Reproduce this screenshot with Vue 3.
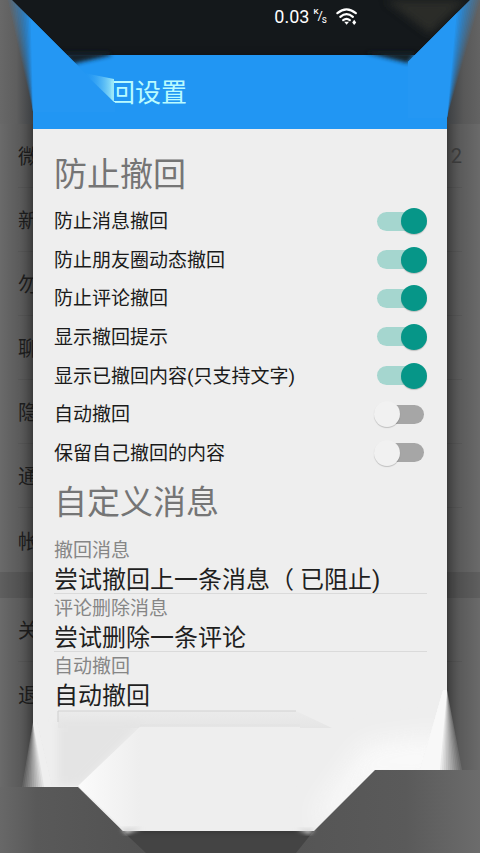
<script setup>
import { reactive } from 'vue'

const backdropGroups = [
  ['微', '新', '勿', '聊', '隐', '通', '帐'],
  ['关', '退'],
]

const switches = reactive([
  { id: 'message', label: '防止消息撤回', on: true },
  { id: 'moments', label: '防止朋友圈动态撤回', on: true },
  { id: 'comment', label: '防止评论撤回', on: true },
  { id: 'hint', label: '显示撤回提示', on: true },
  { id: 'content', label: '显示已撤回内容(只支持文字)', on: true },
  { id: 'auto', label: '自动撤回', on: false },
  { id: 'keep', label: '保留自己撤回的内容', on: false },
])

const fields = reactive([
  { id: 'recall-text', label: '撤回消息', value: '尝试撤回上一条消息（ 已阻止)' },
  { id: 'delete-text', label: '评论删除消息', value: '尝试删除一条评论' },
  { id: 'auto-text', label: '自动撤回', value: '自动撤回' },
])

// A fan is a stack of translucent wedges whose combined opacity grows evenly
const STEPS = 12
const fan = (shape) =>
  Array.from({ length: STEPS }, (_, i) => ({ d: shape(i), opacity: 1 / (STEPS - i) }))

const leftFan = fan((i) => `M33 722L${22 + 2 * i} 787H52L37 722Z`)
const rightFan = fan((i) => `M447 690L${462 - 2 * i} 770H420L443 690Z`)
const topLeftFan = fan((i) => `M33 112L${8 + 2 * i} 0H130V112Z`)
const topRightFan = fan((i) => `M447 118L${480 - 2 * i} 0H390V118Z`)
</script>

<template>
  <div class="screen">
    <div class="backdrop">
      <div class="backdrop-head"></div>
      <ul v-for="(group, g) in backdropGroups" :key="g" class="backdrop-group">
        <li v-for="(name, i) in group" :key="name">
          <span>{{ name }}</span>
          <span v-if="g === 0 && i === 0" class="count">2</span>
        </li>
      </ul>
    </div>

    <div class="front">
      <header class="status">
        <span class="speed">0.03</span>
        <span class="unit"><span class="k">K</span><span class="slash">/</span><span class="s">s</span></span>
        <svg class="wifi" viewBox="0 0 22 18" aria-hidden="true">
          <g fill="none" stroke="#fff" stroke-width="2.2" stroke-linecap="round">
            <path d="M1.4 5.2Q10.5-2.4 19.8 5.2" />
            <path d="M4.3 8.8Q10.5 3.4 16.9 8.8" />
            <path d="M7.2 12.2Q10.5 9.4 13.8 12.2" />
          </g>
          <path d="M8.2 13.8h4.8l-2.4 3z" fill="#fff" />
          <path d="M16.2 14.4l2-2.6 2 2.6-2 2.7z" fill="#fff" />
        </svg>
      </header>

      <main class="dialog">
        <h1>回设置</h1>
        <form class="body" @submit.prevent>
          <h2>防止撤回</h2>
          <div class="switches">
            <label v-for="s in switches" :key="s.id" class="row" :for="s.id">
              <span>{{ s.label }}</span>
              <input :id="s.id" v-model="s.on" type="checkbox" role="switch" class="switch" />
            </label>
          </div>
          <h2>自定义消息</h2>
          <div class="fields">
            <div v-for="f in fields" :key="f.id" class="field">
              <label :for="f.id">{{ f.label }}</label>
              <input :id="f.id" v-model="f.value" type="text" />
            </div>
          </div>
        </form>
      </main>
    </div>

    <svg class="corners" viewBox="0 0 480 853" preserveAspectRatio="none" aria-hidden="true">
      <defs>
        <filter id="b2" x="-30%" y="-30%" width="160%" height="160%"><feGaussianBlur stdDeviation="2" /></filter>
        <filter id="b4" x="-50%" y="-50%" width="200%" height="200%"><feGaussianBlur stdDeviation="4" /></filter>
        <filter id="b14" x="-60%" y="-60%" width="220%" height="220%"><feGaussianBlur stdDeviation="14" /></filter>
        <linearGradient id="gl"><stop offset="0" stop-color="#686868" /><stop offset=".5" stop-color="#5e5e5e" /><stop offset="1" stop-color="#3c3f42" /></linearGradient>
        <linearGradient id="gr"><stop offset="0" stop-color="#3c3f42" /><stop offset=".5" stop-color="#585858" /><stop offset="1" stop-color="#636363" /></linearGradient>
        <linearGradient id="streak"><stop offset="0" stop-color="#2a9cf5" stop-opacity="0" /><stop offset="1" stop-color="#9eeaf8" /></linearGradient>
        <linearGradient id="dl"><stop offset="0" stop-color="#686868" /><stop offset=".25" stop-color="#595959" /><stop offset="1" stop-color="#525252" /></linearGradient>
        <linearGradient id="dr"><stop offset="0" stop-color="#555" /><stop offset=".6" stop-color="#5a5a5a" /><stop offset="1" stop-color="#6c6c6c" /></linearGradient>
        <linearGradient id="wl"><stop offset="0" stop-color="#fbfbfb" /><stop offset="1" stop-color="#eee" /></linearGradient>
        <linearGradient id="btn" x1="0" y1="0" x2="0" y2="1"><stop offset="0" stop-color="#ebebeb" /><stop offset="1" stop-color="#e5e5e5" /></linearGradient>
        <clipPath id="ctl"><path d="M0 0H12L115 103V124H0Z" /></clipPath>
        <clipPath id="ctr"><path d="M480 0H470L408 62V124H480Z" /></clipPath>
        <clipPath id="inner"><path d="M34 700H446V770H375L312 831H126L78 786H34Z" /></clipPath>
      </defs>

      <path d="M62 52H108L112 55L72 64Z" fill="#14222c" filter="url(#b2)" />
      <path d="M364 52H416L408 63Z" fill="#182128" filter="url(#b2)" />
      <path d="M385 0H466L430 34Z" fill="#34342f" opacity=".7" filter="url(#b4)" />
      <g clip-path="url(#ctl)">
        <path d="M0 0H33V124H0Z" fill="url(#gl)" />
        <path v-for="w in topLeftFan" :key="w.d" :d="w.d" fill="#2497f3" :opacity="w.opacity" />
      </g>
      <g clip-path="url(#ctr)">
        <path d="M447 0H480V124H447Z" fill="url(#gr)" />
        <path v-for="w in topRightFan" :key="w.d" :d="w.d" fill="#2497f3" :opacity="w.opacity" />
      </g>
      <path d="M84 73L114 79V102Z" fill="url(#streak)" />

      <g clip-path="url(#inner)">
        <path d="M58 711H296L332 728H58Z" fill="url(#btn)" />
        <path d="M58 722H144L80 786H58Z" fill="#e4e4e4" filter="url(#b4)" />
        <path d="M140 727H300V831H126L78 786Z" fill="#eee" />
        <path d="M140 727V831H126L78 786Z" fill="url(#wl)" />
        <path d="M365 745L446 735V780H375L325 831L315 815Z" fill="#fdfdfd" opacity=".85" filter="url(#b14)" />
        <path d="M58 711H296" stroke="#d2d2d2" />
        <path d="M58 711V722" stroke="#cfcfcf" />
        <path d="M140 725H300" stroke="#e2e2e2" />
      </g>
      <path d="M33 722L46 787H22Z" fill="#575757" />
      <path v-for="w in leftFan" :key="w.d" :d="w.d" fill="#efefef" :opacity="w.opacity" />
      <path d="M447 690L438 770H462Z" fill="#606060" />
      <path v-for="w in rightFan" :key="w.d" :d="w.d" fill="#f8f8f8" :opacity="w.opacity" />

      <path d="M0 787H78L130 838L146 853H0Z" fill="url(#dl)" />
      <path d="M480 770H375L312 833L296 853H480Z" fill="url(#dr)" />
      <path d="M121 828H142L126 834Z" fill="#d5d5d5" filter="url(#b2)" />
      <path d="M296 829H315L309 834Z" fill="#d5d5d5" filter="url(#b2)" />
    </svg>
  </div>
</template>

<style>
body {
  margin: 0;
}
</style>

<style scoped>
.screen {
  position: relative;
  display: grid;
  grid-template-columns: minmax(0, 1fr);
  min-height: 100vh;
  overflow: hidden;
  background: #444;
  font-family: Roboto, "Noto Sans CJK SC", sans-serif;
}

.backdrop,
.front {
  grid-area: 1 / 1;
}

.backdrop {
  display: flex;
  flex-direction: column;
  gap: 26px;
  background:
    linear-gradient(to right, transparent, rgba(0, 0, 0, 0.15) 20px, rgba(0, 0, 0, 0.35) 33px, rgba(0, 0, 0, 0.35) calc(100% - 33px), rgba(0, 0, 0, 0.15) calc(100% - 20px), transparent),
    #6a6a6a;
}

.backdrop-head {
  height: 124px;
  margin-bottom: -26px;
}

.backdrop-group {
  margin: 0;
  padding: 0;
  list-style: none;
}

.backdrop-group + .backdrop-group {
  box-shadow: 0 -26px 0 rgba(0, 0, 0, 0.1);
}

.backdrop-group li {
  display: flex;
  align-items: center;
  justify-content: space-between;
  box-sizing: border-box;
  height: 64px;
  margin: 0 18px;
  border-bottom: 1px solid rgba(0, 0, 0, 0.06);
  color: #1c1c1c;
  font-size: 20px;
}

.backdrop-group li:last-child {
  border-bottom: 0;
}

.backdrop-group .count {
  color: #3a3a3a;
}

.front {
  display: flex;
  flex-direction: column;
  padding-bottom: 22px;
  background: linear-gradient(to top, #444 22px, transparent 22px);
}

.status {
  display: flex;
  align-items: flex-start;
  justify-content: flex-end;
  box-sizing: border-box;
  height: 55px;
  padding: 6px 122px 0 0;
  background: #14181b;
  color: #fff;
}

.speed {
  font-size: 18px;
  line-height: 22px;
}

.unit {
  display: flex;
  margin: 0 9px 0 4px;
  line-height: 12px;
}

.k {
  font-size: 8px;
  font-weight: 500;
}

.slash {
  margin: 0 -1px;
  font-size: 13px;
  line-height: 20px;
}

.s {
  padding-top: 8px;
  font-size: 10px;
}

.wifi {
  width: 22px;
  height: 18px;
  margin-top: 2px;
}

.dialog {
  flex: 1;
  margin: 0 33px;
  background: #eee;
  box-shadow: 0 0 8px rgba(0, 0, 0, 0.3);
}

h1 {
  margin: 0;
  padding: 2px 0 0 76px;
  background: #2196f3;
  color: #b9fbff;
  font-size: 26px;
  font-weight: 400;
  line-height: 72px;
}

.body {
  padding: 20px 20px 0 21px;
}

h2 {
  margin: 0;
  padding-top: 4px;
  color: #757575;
  font-size: 33px;
  font-weight: 400;
  line-height: 44px;
}

.switches {
  display: grid;
  grid-auto-rows: 1fr;
  min-height: 270px;
  margin: 5px 0;
}

.row {
  display: flex;
  align-items: center;
  justify-content: space-between;
  color: #1a1a1a;
  font-size: 19px;
  line-height: 28px;
}

.row span {
  padding-top: 2px;
}

.switch {
  appearance: none;
  display: flex;
  align-items: center;
  width: 47px;
  height: 19px;
  margin: 0 3px;
  border-radius: 10px;
  background: #a6a6a6;
}

.switch::before {
  content: "";
  width: 26px;
  height: 26px;
  margin: 0 -3px;
  border-radius: 50%;
  background: #f1f1f1;
  box-shadow: 0 1px 1px rgba(0, 0, 0, 0.2);
}

.switch:checked {
  justify-content: flex-end;
  background: #a5d6cf;
}

.switch:checked::before {
  background: #069688;
}

.fields {
  margin-top: 11px;
}

.field {
  display: flex;
  flex-direction: column;
}

.field label {
  padding-top: 2px;
  color: #868686;
  font-size: 19px;
  line-height: 26px;
}

.field input {
  box-sizing: border-box;
  width: 100%;
  height: 30px;
  padding: 0 0 2px;
  border: 0;
  border-bottom: 1px solid #dadada;
  background: transparent;
  color: #1f1f1f;
  font-family: inherit;
  font-size: 24px;
}

.field:last-child input {
  border-bottom-color: transparent;
}

.corners {
  position: absolute;
  inset: 0;
  width: 100%;
  height: 100%;
  pointer-events: none;
}
</style>
